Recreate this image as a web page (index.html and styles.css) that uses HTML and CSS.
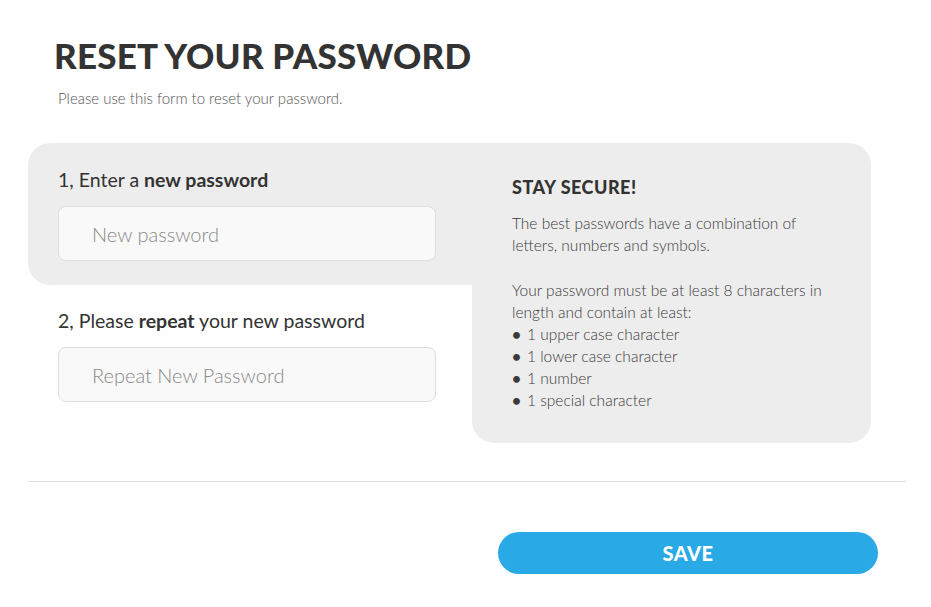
FILE: index.html
```html
<!DOCTYPE html>
<html lang="en">
<head>
<meta charset="utf-8">
<title>Reset your password</title>
<link rel="stylesheet" href="styles.css">
</head>
<body>
<main class="page">
  <h1 class="title">RESET YOUR PASSWORD</h1>
  <p class="intro">Please use this form to reset your password.</p>
  <div class="form-row">
    <div class="fields">
      <div class="field field--shaded">
        <label class="label" for="pw1">1, Enter a <b>new password</b></label>
        <input class="input" id="pw1" type="password" placeholder="New password">
      </div>
      <div class="field">
        <label class="label" for="pw2">2, Please <b>repeat</b> your new password</label>
        <input class="input" id="pw2" type="password" placeholder="Repeat New Password">
      </div>
    </div>
    <aside class="tips">
      <h2 class="tips-title">STAY SECURE!</h2>
      <p class="tips-text">The best passwords have a combination of letters, numbers and symbols.</p>
      <p class="tips-text">Your password must be at least 8 characters in length and contain at least:</p>
      <ul class="tips-list">
        <li>1 upper case character</li>
        <li>1 lower case character</li>
        <li>1 number</li>
        <li>1 special character</li>
      </ul>
    </aside>
  </div>
  <hr class="divider">
  <div class="actions">
    <button class="save" type="button">SAVE</button>
  </div>
</main>
</body>
</html>
```
FILE: styles.css
```css
* { box-sizing: border-box; }
html, body { margin: 0; padding: 0; background: #fff; }
body { font-family: Lato, "Open Sans", sans-serif; color: #333; }

.page { padding: 33px 25px 0 28px; }

.title {
  margin: 0 0 0 26px;
  font-size: 35px;
  line-height: 44px;
  font-weight: 900;
  letter-spacing: 0.2px;
  color: #333;
}

.intro {
  margin: 11px 0 0 30px;
  font-size: 15px;
  line-height: 20px;
  font-weight: 300;
  color: #555;
}

.form-row {
  display: flex;
  align-items: flex-start;
  margin-top: 35px;
}

.fields { width: 444px; flex: none; }

.field { padding: 24px 36px 0 30px; }
.field--shaded {
  background: #ededed;
  border-radius: 22px 0 0 22px;
  padding-top: 25px;
  padding-bottom: 24px;
}

.label {
  display: block;
  margin-bottom: 14px;
  font-size: 19.5px;
  line-height: 24px;
  color: #333;
}
.label b { font-weight: 700; }

.input {
  display: block;
  width: 378px;
  height: 55px;
  padding: 0 33px;
  border: 1px solid #dedede;
  border-radius: 8px;
  background: #f9f9f9;
  font-family: inherit;
  font-size: 20px;
  font-weight: 300;
  color: #333;
  outline: none;
}
.input::placeholder { color: #888; }

.tips {
  width: 399px;
  flex: none;
  background: #ededed;
  border-radius: 0 22px 22px 22px;
  padding: 33px 40px 32px 40px;
  color: #3a3a3a;
}

.tips-title {
  margin: 0 0 14px;
  font-size: 18px;
  line-height: 22px;
  font-weight: 900;
  letter-spacing: 0.5px;
  color: #333;
}

.tips-text {
  margin: 0 0 23px;
  font-size: 15.5px;
  line-height: 22px;
  font-weight: 300;
}
.tips-text:last-of-type { margin-bottom: 0; }

.tips-list {
  list-style: none;
  margin: 0;
  padding: 0;
  font-size: 15.5px;
  line-height: 22px;
  font-weight: 300;
}
.tips-list li::before {
  content: "•";
  display: inline-block;
  width: 15px;
  font-weight: 700;
}

.divider {
  margin: 38px 0 0;
  border: 0;
  border-top: 1px solid #dddddd;
}

.actions {
  display: flex;
  justify-content: flex-end;
  padding: 50px 28px 0 0;
}

.save {
  width: 380px;
  height: 42px;
  border: 0;
  border-radius: 21px;
  background: #29a9e6;
  color: #fff;
  font-family: inherit;
  font-size: 20px;
  font-weight: 900;
  letter-spacing: 0.5px;
  cursor: pointer;
}
```
